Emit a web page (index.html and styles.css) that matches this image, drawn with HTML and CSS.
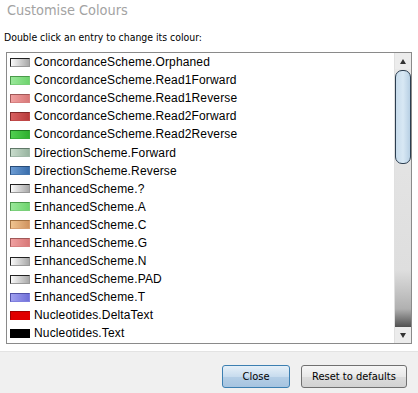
FILE: index.html
```html
<!DOCTYPE html>
<html lang="en">
<head>
  <meta charset="UTF-8" />
  <title>Customise Colours</title>
  <link rel="stylesheet" href="styles.css">
</head>
<body>
  <div class="dialog">
    <div class="title">Customise Colours</div>
    <div class="prompt">Double click an entry to change its colour:</div>
    <div class="list">
      <ul class="rows">
        <li><span class="swatch grey"></span>ConcordanceScheme.Orphaned</li>
        <li><span class="swatch lightgreen"></span>ConcordanceScheme.Read1Forward</li>
        <li><span class="swatch pink"></span>ConcordanceScheme.Read1Reverse</li>
        <li><span class="swatch darkred"></span>ConcordanceScheme.Read2Forward</li>
        <li><span class="swatch green"></span>ConcordanceScheme.Read2Reverse</li>
        <li><span class="swatch sage"></span>DirectionScheme.Forward</li>
        <li><span class="swatch blue"></span>DirectionScheme.Reverse</li>
        <li><span class="swatch grey"></span>EnhancedScheme.?</li>
        <li><span class="swatch lightgreen"></span>EnhancedScheme.A</li>
        <li><span class="swatch tan"></span>EnhancedScheme.C</li>
        <li><span class="swatch pink"></span>EnhancedScheme.G</li>
        <li><span class="swatch grey"></span>EnhancedScheme.N</li>
        <li><span class="swatch grey"></span>EnhancedScheme.PAD</li>
        <li><span class="swatch violet"></span>EnhancedScheme.T</li>
        <li><span class="swatch red"></span>Nucleotides.DeltaText</li>
        <li><span class="swatch black"></span>Nucleotides.Text</li>
      </ul>
      <div class="scrollbar">
        <div class="arrow up"></div>
        <div class="track">
          <div class="thumb"></div>
        </div>
        <div class="arrow down"></div>
      </div>
    </div>
    <div class="buttons">
      <button class="btn primary">Close</button>
      <button class="btn reset">Reset to defaults</button>
    </div>
  </div>
</body>
</html>
```

FILE: styles.css
```css
body {
  margin: 0;
  background-color: #fff;
  font-family: "DejaVu Sans Condensed", "DejaVu Sans", sans-serif;
  color: #000;
}
.dialog {
  width: 418px;
  height: 393px;
  display: flex;
  flex-direction: column;
  overflow: hidden;
}
.title {
  height: 22px;
  line-height: 21px;
  padding-left: 7px;
  font-size: 14.4px;
  color: #a3a3a3;
}
.prompt {
  height: 30px;
  line-height: 30px;
  padding-left: 4px;
  font-size: 10.4px;
}
.list {
  margin: 0 6px;
  height: 290px;
  border: 1px solid #8a8a8a;
  display: flex;
  background-color: #fff;
}
.rows {
  flex: 1;
  list-style: none;
  margin: 0;
  padding: 0 0 0 3px;
  font-family: "Liberation Sans", Arial, sans-serif;
  font-size: 12px;
  letter-spacing: 0.15px;
}
.rows li {
  height: 18.1px;
  display: flex;
  align-items: center;
}
.swatch {
  width: 18px;
  height: 7px;
  margin-right: 4px;
  border: 1px solid;
  border-color: #333 #888 #888 #333;
}
.swatch.grey { background: linear-gradient(to right, #fafafa, #a8a8a8); border-color: #222 #999 #999 #222; }
.swatch.lightgreen { background: linear-gradient(to right, #9ae89a, #6fd46f); border-color: #4a9a4a #7ad07a #7ad07a #4a9a4a; }
.swatch.pink { background: linear-gradient(to right, #f0a0a0, #d87878); border-color: #a05858 #d88080 #d88080 #a05858; }
.swatch.darkred { background: linear-gradient(to right, #d86060, #b83c3c); border-color: #802828 #c04848 #c04848 #802828; }
.swatch.green { background: linear-gradient(to right, #50d050, #2fb02f); border-color: #207820 #38b038 #38b038 #207820; }
.swatch.sage { background: linear-gradient(to right, #c8dccc, #98b4a0); border-color: #607868 #a0b8a8 #a0b8a8 #607868; }
.swatch.blue { background: linear-gradient(to right, #6c9cd4, #3a6eac); border-color: #284c78 #4878b0 #4878b0 #284c78; }
.swatch.tan { background: linear-gradient(to right, #f0c490, #d09460); border-color: #a07040 #d8a070 #d8a070 #a07040; }
.swatch.violet { background: linear-gradient(to right, #a0a0f0, #7070d8); border-color: #5050a8 #8080e0 #8080e0 #5050a8; }
.swatch.red { background: #e00000; border-color: #a00000 #e00000 #e00000 #a00000; }
.swatch.black { background: #000; border-color: #000; }

.scrollbar {
  width: 16px;
  display: flex;
  flex-direction: column;
  background: linear-gradient(to right, #e6e6e6, #f0f0f0);
  border-left: 1px solid #e0e0e0;
}
.arrow {
  height: 16px;
  display: flex;
  align-items: center;
  justify-content: center;
  background: #ececec;
}
.arrow::after {
  content: "";
  border-left: 3px solid transparent;
  border-right: 3px solid transparent;
}
.arrow.up::after { border-bottom: 5px solid #333; }
.arrow.down::after { border-top: 5px solid #333; }
.track {
  flex: 1;
  display: flex;
  flex-direction: column;
  background: linear-gradient(to bottom, #e8e8e8 0%, #dedede 78%, #b0b0b0 93%, #505050 100%);
}
.thumb {
  height: 92px;
  margin-top: 1px;
  border: 1px solid #2c3e50;
  border-radius: 7px;
  background: linear-gradient(to right, #c8dcec, #d8e8f4 50%, #b8d0e4);
}

.buttons {
  flex: 1;
  margin-top: 7px;
  background-color: #f0f0f0;
  border-top: 1px solid #e3e3e3;
  display: flex;
  justify-content: flex-end;
  align-items: flex-start;
  gap: 11px;
  padding: 13px 11px 0 0;
}
.btn {
  height: 23px;
  padding: 0;
  font-family: "DejaVu Sans Condensed", "DejaVu Sans", sans-serif;
  font-size: 11px;
  color: #000;
  border: 1px solid #707070;
  border-radius: 3px;
  background: linear-gradient(to bottom, #f6f6f6, #e8e8e8 50%, #dcdcdc 51%, #d2d2d2);
}
.btn.primary {
  width: 68px;
  border-color: #3c7fb1;
  background: linear-gradient(to bottom, #e6f0f8, #c8dcee 50%, #b4cee6 51%, #a6c4e0);
}
.btn.reset {
  width: 106px;
}
```
